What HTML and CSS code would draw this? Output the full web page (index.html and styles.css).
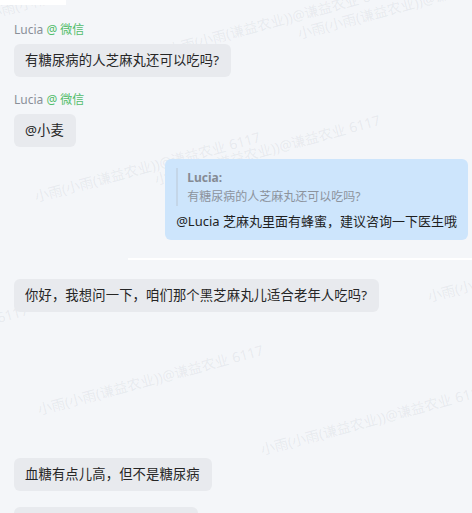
FILE: index.html
```html
<!DOCTYPE html>
<html lang="zh-CN">
<head>
  <meta charset="UTF-8">
  <meta name="viewport" content="width=device-width, initial-scale=1.0">
  <title>会话记录</title>
  <link rel="stylesheet" href="styles.css">
</head>
<body>
  <div class="watermarks">
    <span class="wm wm-a">小雨(小雨(谦益农业))@谦益农业 6117</span>
    <span class="wm wm-b">小雨(小雨(谦益农业))@谦益农业 6117</span>
    <span class="wm wm-c">小雨(小雨(谦益农业))@谦益农业 6117</span>
    <span class="wm wm-d">小雨(小雨(谦益农业))@谦益农业 6117</span>
    <span class="wm wm-e">小雨(小雨(谦益农业))@谦益农业 6117</span>
    <span class="wm wm-f">小雨(小雨(谦益农业))@谦益农业 6117</span>
    <span class="wm wm-g">小雨(小雨(谦益农业))@谦益农业 6117</span>
    <span class="wm wm-h">小雨(小雨(谦益农业))@谦益农业 6117</span>
    <span class="wm wm-i">小雨(小雨(谦益农业))@谦益农业 6117</span>
  </div>

  <div class="chat">
    <div class="top-strip"></div>

    <div class="msg msg-first">
      <div class="sender">Lucia <span class="channel">@ 微信</span></div>
      <div class="bubble">有糖尿病的人芝麻丸还可以吃吗?</div>
    </div>

    <div class="msg">
      <div class="sender">Lucia <span class="channel">@ 微信</span></div>
      <div class="bubble">@小麦</div>
    </div>

    <div class="msg msg-self">
      <div class="bubble bubble-self">
        <div class="quote">
          <div class="quote-name">Lucia:</div>
          <div class="quote-text">有糖尿病的人芝麻丸还可以吃吗?</div>
        </div>
        <div class="reply">@Lucia 芝麻丸里面有蜂蜜，建议咨询一下医生哦</div>
      </div>
    </div>

    <div class="divider"></div>

    <div class="msg msg-after-divider">
      <div class="bubble">你好，我想问一下，咱们那个黑芝麻丸儿适合老年人吃吗?</div>
    </div>

    <div class="msg msg-gap">
      <div class="bubble">血糖有点儿高，但不是糖尿病</div>
    </div>

    <div class="msg msg-next">
      <div class="bubble">那少吃一点儿应该没问题吧</div>
    </div>
  </div>
</body>
</html>
```

FILE: styles.css
```css
* { box-sizing: border-box; }
html, body { height: 100%; }
body {
  margin: 0;
  background-color: #f4f6f9;
  font-family: "Noto Sans", "Noto Sans CJK SC", sans-serif;
  color: #262626;
  overflow: hidden;
}

/* watermark layer sits behind the messages */
.watermarks {
  position: absolute;
  top: 0;
  left: 0;
  width: 100%;
  height: 100%;
  overflow: hidden;
  pointer-events: none;
}
.wm {
  position: absolute;
  white-space: nowrap;
  font-size: 14px;
  line-height: 16px;
  color: rgba(120, 130, 148, 0.11);
  transform-origin: left bottom;
  transform: rotate(-15deg);
}
.wm-a { left: 37px; top: 189px; }
.wm-b { left: 157px; top: 172px; }
.wm-c { left: 40px; top: 402px; }
.wm-d { left: 263px; top: 442px; }
.wm-e { left: -195px; top: 362px; }
.wm-f { left: 170px; top: 42px; }
.wm-g { left: 300px; top: 26px; }
.wm-h { left: -10px; top: 6px; }
.wm-i { left: 430px; top: 289px; }

.chat {
  position: relative;
  display: flex;
  flex-direction: column;
  padding: 0 4px 0 14px;
}
.top-strip {
  width: 66px;
  height: 5px;
  margin-left: -14px;
  background: #fff;
}

.msg {
  display: flex;
  flex-direction: column;
  align-items: flex-start;
  margin-top: 15px;
}
.msg-first { margin-top: 17px; }
.msg-self { align-items: flex-end; margin-top: 12px; }
.msg-after-divider { margin-top: 19px; }
.msg-gap { margin-top: 146px; }
.msg-next { margin-top: 16px; }

.sender {
  font-size: 12px;
  line-height: 16px;
  color: #8a8f98;
  margin-bottom: 6px;
}
.channel { color: #52bd6b; }

.bubble {
  background: #e8eaee;
  border-radius: 6px;
  padding: 8px 12px 8px 11px;
  font-size: 13.3px;
  line-height: 17px;
  letter-spacing: 0.15px;
  white-space: nowrap;
}
.bubble-self {
  background: #cde5fc;
  padding: 9px 11px 8px 11px;
  letter-spacing: 0;
}
.quote {
  border-left: 2px solid #c4d6e8;
  padding-left: 9px;
}
.quote-name {
  font-size: 12px;
  line-height: 19px;
  font-weight: bold;
  color: #858b94;
}
.quote-text {
  font-size: 12px;
  line-height: 19px;
  color: #8c939c;
}
.reply {
  margin-top: 4px;
  font-size: 13px;
  line-height: 22px;
  color: #1f1f1f;
}

.divider {
  height: 2px;
  margin-top: 18px;
  margin-left: 114px;
  margin-right: -4px;
  background: #fff;
}
```
